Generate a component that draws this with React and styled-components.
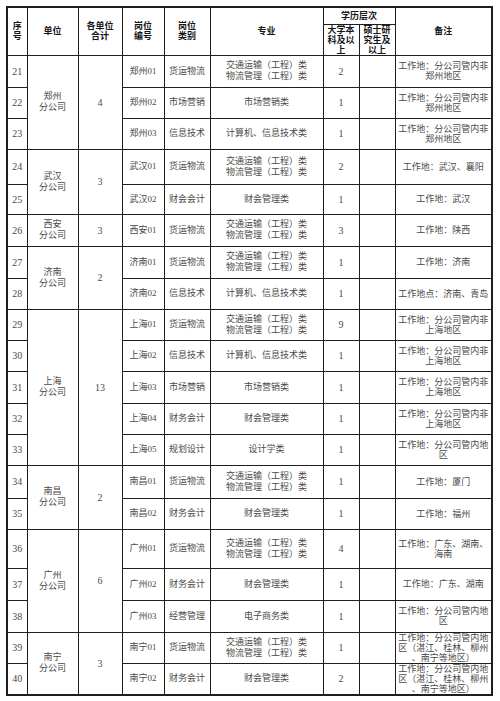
import React from "react";
import styled, { createGlobalStyle } from "styled-components";

const GlobalStyle = createGlobalStyle`
  html, body {
    margin: 0;
    padding: 0;
    background: #fff;
  }
  body {
    font-family: "Liberation Serif", "Noto Sans CJK SC", serif;
  }
`;

const TRANSPORT = ["交通运输（工程）类", "物流管理（工程）类"];
const notIn = (city) => ["工作地：分公司管内非", `${city}地区`];
const LOCAL = ["工作地：分公司管内地", "区"];
const NANNING = ["工作地：分公司管内地", "区（湛江、桂林、柳州", "、南宁等地区）"];

const groups = [
  {
    unit: "郑州",
    total: 4,
    rows: [
      { no: 21, code: "郑州01", type: "货运物流", major: TRANSPORT, bachelor: "2", note: notIn("郑州"), h: 32 },
      { no: 22, code: "郑州02", type: "市场营销", major: ["市场营销类"], bachelor: "1", note: notIn("郑州"), h: 31 },
      { no: 23, code: "郑州03", type: "信息技术", major: ["计算机、信息技术类"], bachelor: "1", note: notIn("郑州"), h: 31 },
    ],
  },
  {
    unit: "武汉",
    total: 3,
    rows: [
      { no: 24, code: "武汉01", type: "货运物流", major: TRANSPORT, bachelor: "2", note: ["工作地：武汉、襄阳"], h: 35 },
      { no: 25, code: "武汉02", type: "财会会计", major: ["财会管理类"], bachelor: "1", note: ["工作地：武汉"], h: 30 },
    ],
  },
  {
    unit: "西安",
    total: 3,
    rows: [
      { no: 26, code: "西安01", type: "货运物流", major: TRANSPORT, bachelor: "3", note: ["工作地：陕西"], h: 32 },
    ],
  },
  {
    unit: "济南",
    total: 2,
    rows: [
      { no: 27, code: "济南01", type: "货运物流", major: TRANSPORT, bachelor: "1", note: ["工作地：济南"], h: 32 },
      { no: 28, code: "济南02", type: "信息技术", major: ["计算机、信息技术类"], bachelor: "1", note: ["工作地点：济南、青岛"], h: 31 },
    ],
  },
  {
    unit: "上海",
    total: 13,
    rows: [
      { no: 29, code: "上海01", type: "货运物流", major: TRANSPORT, bachelor: "9", note: notIn("上海"), h: 31 },
      { no: 30, code: "上海02", type: "信息技术", major: ["计算机、信息技术类"], bachelor: "1", note: notIn("上海"), h: 31 },
      { no: 31, code: "上海03", type: "市场营销", major: ["市场营销类"], bachelor: "1", note: notIn("上海"), h: 32 },
      { no: 32, code: "上海04", type: "财务会计", major: ["财会管理类"], bachelor: "1", note: notIn("上海"), h: 31 },
      { no: 33, code: "上海05", type: "规划设计", major: ["设计学类"], bachelor: "1", note: LOCAL, h: 31 },
    ],
  },
  {
    unit: "南昌",
    total: 2,
    rows: [
      { no: 34, code: "南昌01", type: "货运物流", major: TRANSPORT, bachelor: "1", note: ["工作地：厦门"], h: 33 },
      { no: 35, code: "南昌02", type: "财务会计", major: ["财会管理类"], bachelor: "1", note: ["工作地：福州"], h: 31 },
    ],
  },
  {
    unit: "广州",
    total: 6,
    rows: [
      { no: 36, code: "广州01", type: "货运物流", major: TRANSPORT, bachelor: "4", note: ["工作地：广东、湖南、", "海南"], h: 39 },
      { no: 37, code: "广州02", type: "财务会计", major: ["财会管理类"], bachelor: "1", note: ["工作地：广东、湖南"], h: 32 },
      { no: 38, code: "广州03", type: "经营管理", major: ["电子商务类"], bachelor: "1", note: LOCAL, h: 32 },
    ],
  },
  {
    unit: "南宁",
    total: 3,
    rows: [
      { no: 39, code: "南宁01", type: "货运物流", major: TRANSPORT, bachelor: "1", note: NANNING, h: 31 },
      { no: 40, code: "南宁02", type: "财务会计", major: ["财会管理类"], bachelor: "2", note: NANNING, h: 31 },
    ],
  },
];

const columns = [20, 51, 44, 42, 46, 113, 36, 36, 97];

export default function App() {
  return (
    <Page>
      <GlobalStyle />
      <Table>
        <colgroup>
          {columns.map((w, i) => (
            <Col key={i} $w={w} />
          ))}
        </colgroup>
        <thead>
          <Row $h={17}>
            <HeadCell rowSpan={2}>{"序\n号"}</HeadCell>
            <HeadCell rowSpan={2}>单位</HeadCell>
            <HeadCell rowSpan={2}>{"各单位\n合计"}</HeadCell>
            <HeadCell rowSpan={2}>{"岗位\n编号"}</HeadCell>
            <HeadCell rowSpan={2}>{"岗位\n类别"}</HeadCell>
            <HeadCell rowSpan={2}>专业</HeadCell>
            <HeadCell colSpan={2}>学历层次</HeadCell>
            <HeadCell rowSpan={2}>备注</HeadCell>
          </Row>
          <Row $h={31}>
            <HeadCell $tight>{"大学本\n科及以\n上"}</HeadCell>
            <HeadCell $tight>{"硕士研\n究生及\n以上"}</HeadCell>
          </Row>
        </thead>
        <tbody>
          {groups.map((g) =>
            g.rows.map((r, i) => (
              <Row key={r.no} $h={r.h}>
                <Cell $num>{r.no}</Cell>
                {i === 0 && (
                  <Cell rowSpan={g.rows.length}>
                    <Line>{g.unit}</Line>
                    <Line>分公司</Line>
                  </Cell>
                )}
                {i === 0 && (
                  <Cell rowSpan={g.rows.length} $num>
                    {g.total}
                  </Cell>
                )}
                <Cell>{r.code}</Cell>
                <Cell>{r.type}</Cell>
                <Cell>
                  {r.major.map((m) => (
                    <Line key={m}>{m}</Line>
                  ))}
                </Cell>
                <Cell $num>{r.bachelor}</Cell>
                <Cell />
                <Cell $note>
                  {r.note.map((n) => (
                    <Line key={n}>{n}</Line>
                  ))}
                </Cell>
              </Row>
            ))
          )}
        </tbody>
      </Table>
    </Page>
  );
}

const Page = styled.div`
  width: 500px;
  height: 701px;
  padding: 6px 0 0 6px;
  box-sizing: border-box;
  background: #fff;
`;

const Table = styled.table`
  border-collapse: collapse;
  table-layout: fixed;
  width: 485px;
  border: 2px solid #1e1e1e;
`;

const Col = styled.col`
  width: ${(p) => p.$w}px;
`;

const Row = styled.tr`
  height: ${(p) => p.$h}px;
`;

const HeadCell = styled.th`
  border: 1px solid #1e1e1e;
  padding: 0 1px;
  font-family: "Noto Sans CJK SC", sans-serif;
  font-size: 9px;
  font-weight: 700;
  line-height: ${(p) => (p.$tight ? "10px" : "10.5px")};
  color: #151515;
  text-align: center;
  vertical-align: middle;
  white-space: pre-line;
`;

const Cell = styled.td`
  border: 1px solid #1e1e1e;
  padding: 0 1px;
  font-family: "Liberation Serif", "Noto Sans CJK SC", serif;
  font-size: ${(p) => (p.$num ? "10px" : "9px")};
  line-height: ${(p) => (p.$note ? "10px" : "11px")};
  color: #4a4a4a;
  text-align: center;
  vertical-align: middle;
`;

const Line = styled.span`
  display: block;
  white-space: nowrap;
`;
